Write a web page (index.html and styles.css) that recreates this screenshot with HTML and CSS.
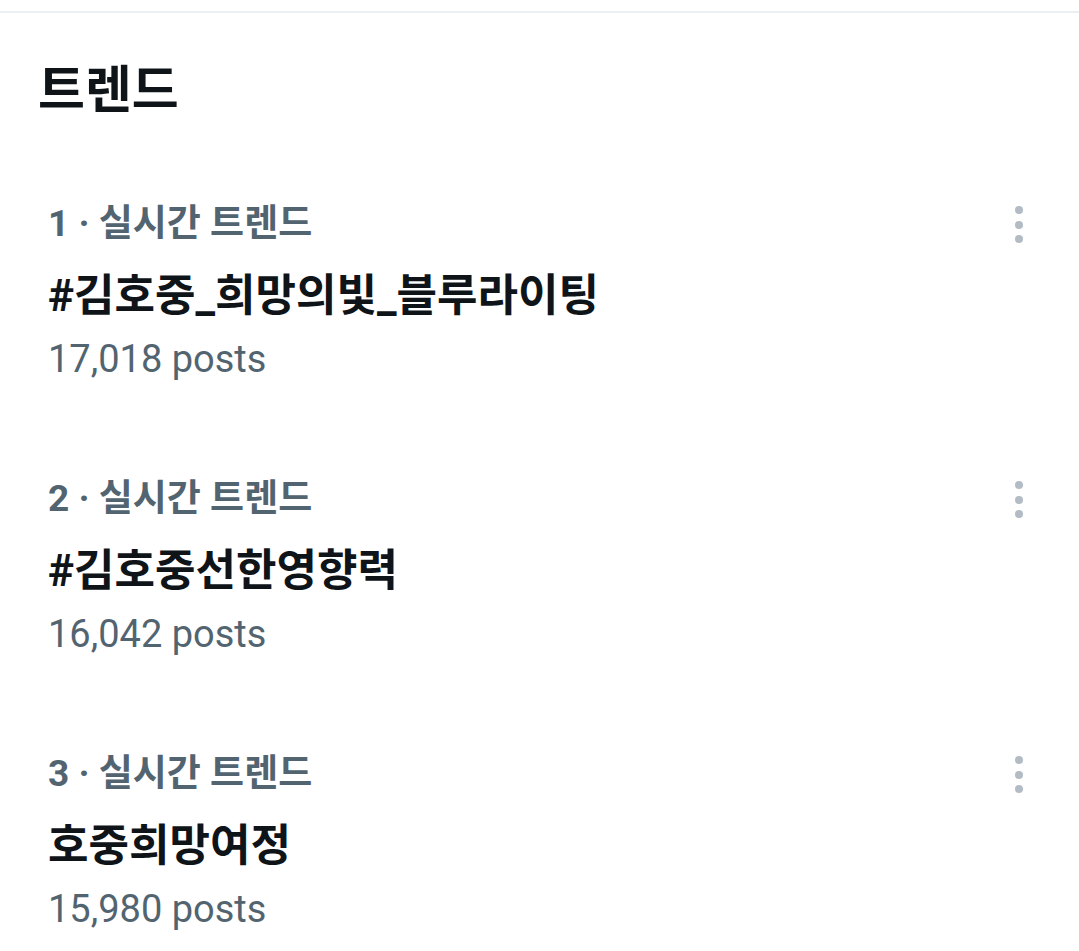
FILE: index.html
```html
<!DOCTYPE html>
<html lang="ko">
<head>
    <meta charset="UTF-8">
    <meta name="viewport" content="width=device-width, initial-scale=1">
    <title>트렌드</title>
    <link rel="stylesheet" href="styles.css">
</head>
<body>

    <div class="divider"></div>

    <h2 class="section-title">트렌드</h2>

    <div class="trend">
        <div class="trend-meta">
            <span>1 · 실시간 트렌드</span>
            <svg class="more" viewBox="0 0 20 40" width="20" height="40">
                <circle cx="10" cy="6" r="4"/>
                <circle cx="10" cy="21" r="4"/>
                <circle cx="10" cy="35" r="4"/>
            </svg>
        </div>
        <div class="trend-name">#김호중_희망의빛_블루라이팅</div>
        <div class="trend-count">17,018 posts</div>
    </div>

    <div class="trend">
        <div class="trend-meta">
            <span>2 · 실시간 트렌드</span>
            <svg class="more" viewBox="0 0 20 40" width="20" height="40">
                <circle cx="10" cy="6" r="4"/>
                <circle cx="10" cy="21" r="4"/>
                <circle cx="10" cy="35" r="4"/>
            </svg>
        </div>
        <div class="trend-name">#김호중선한영향력</div>
        <div class="trend-count">16,042 posts</div>
    </div>

    <div class="trend">
        <div class="trend-meta">
            <span>3 · 실시간 트렌드</span>
            <svg class="more" viewBox="0 0 20 40" width="20" height="40">
                <circle cx="10" cy="6" r="4"/>
                <circle cx="10" cy="21" r="4"/>
                <circle cx="10" cy="35" r="4"/>
            </svg>
        </div>
        <div class="trend-name">호중희망여정</div>
        <div class="trend-count">15,980 posts</div>
    </div>

</body>
</html>
```

FILE: styles.css
```css
body {
    margin: 0;
    background: #ffffff;
    font-family: Roboto, "Noto Sans CJK KR", sans-serif;
    color: #0f1419;
    overflow: hidden;
}
.divider {
    height: 2px;
    margin-top: 11px;
    background-color: #eceff1;
}
.section-title {
    margin: 48px 0 39px 0;
    padding-left: 38px;
    font-size: 51px;
    line-height: 60px;
    font-weight: bold;
}
.trend {
    padding: 40px 50px 54px 48px;
}
.trend-meta {
    display: flex;
    justify-content: space-between;
    align-items: center;
    height: 48px;
    font-size: 37px;
    line-height: 48px;
    font-weight: bold;
    color: #536471;
}
.more {
    fill: #b3bcc4;
}
.trend-name {
    margin-top: 22px;
    font-size: 44px;
    line-height: 52px;
    font-weight: bold;
}
.trend-count {
    margin-top: 15px;
    font-size: 38px;
    line-height: 44px;
    color: #536471;
}
```
